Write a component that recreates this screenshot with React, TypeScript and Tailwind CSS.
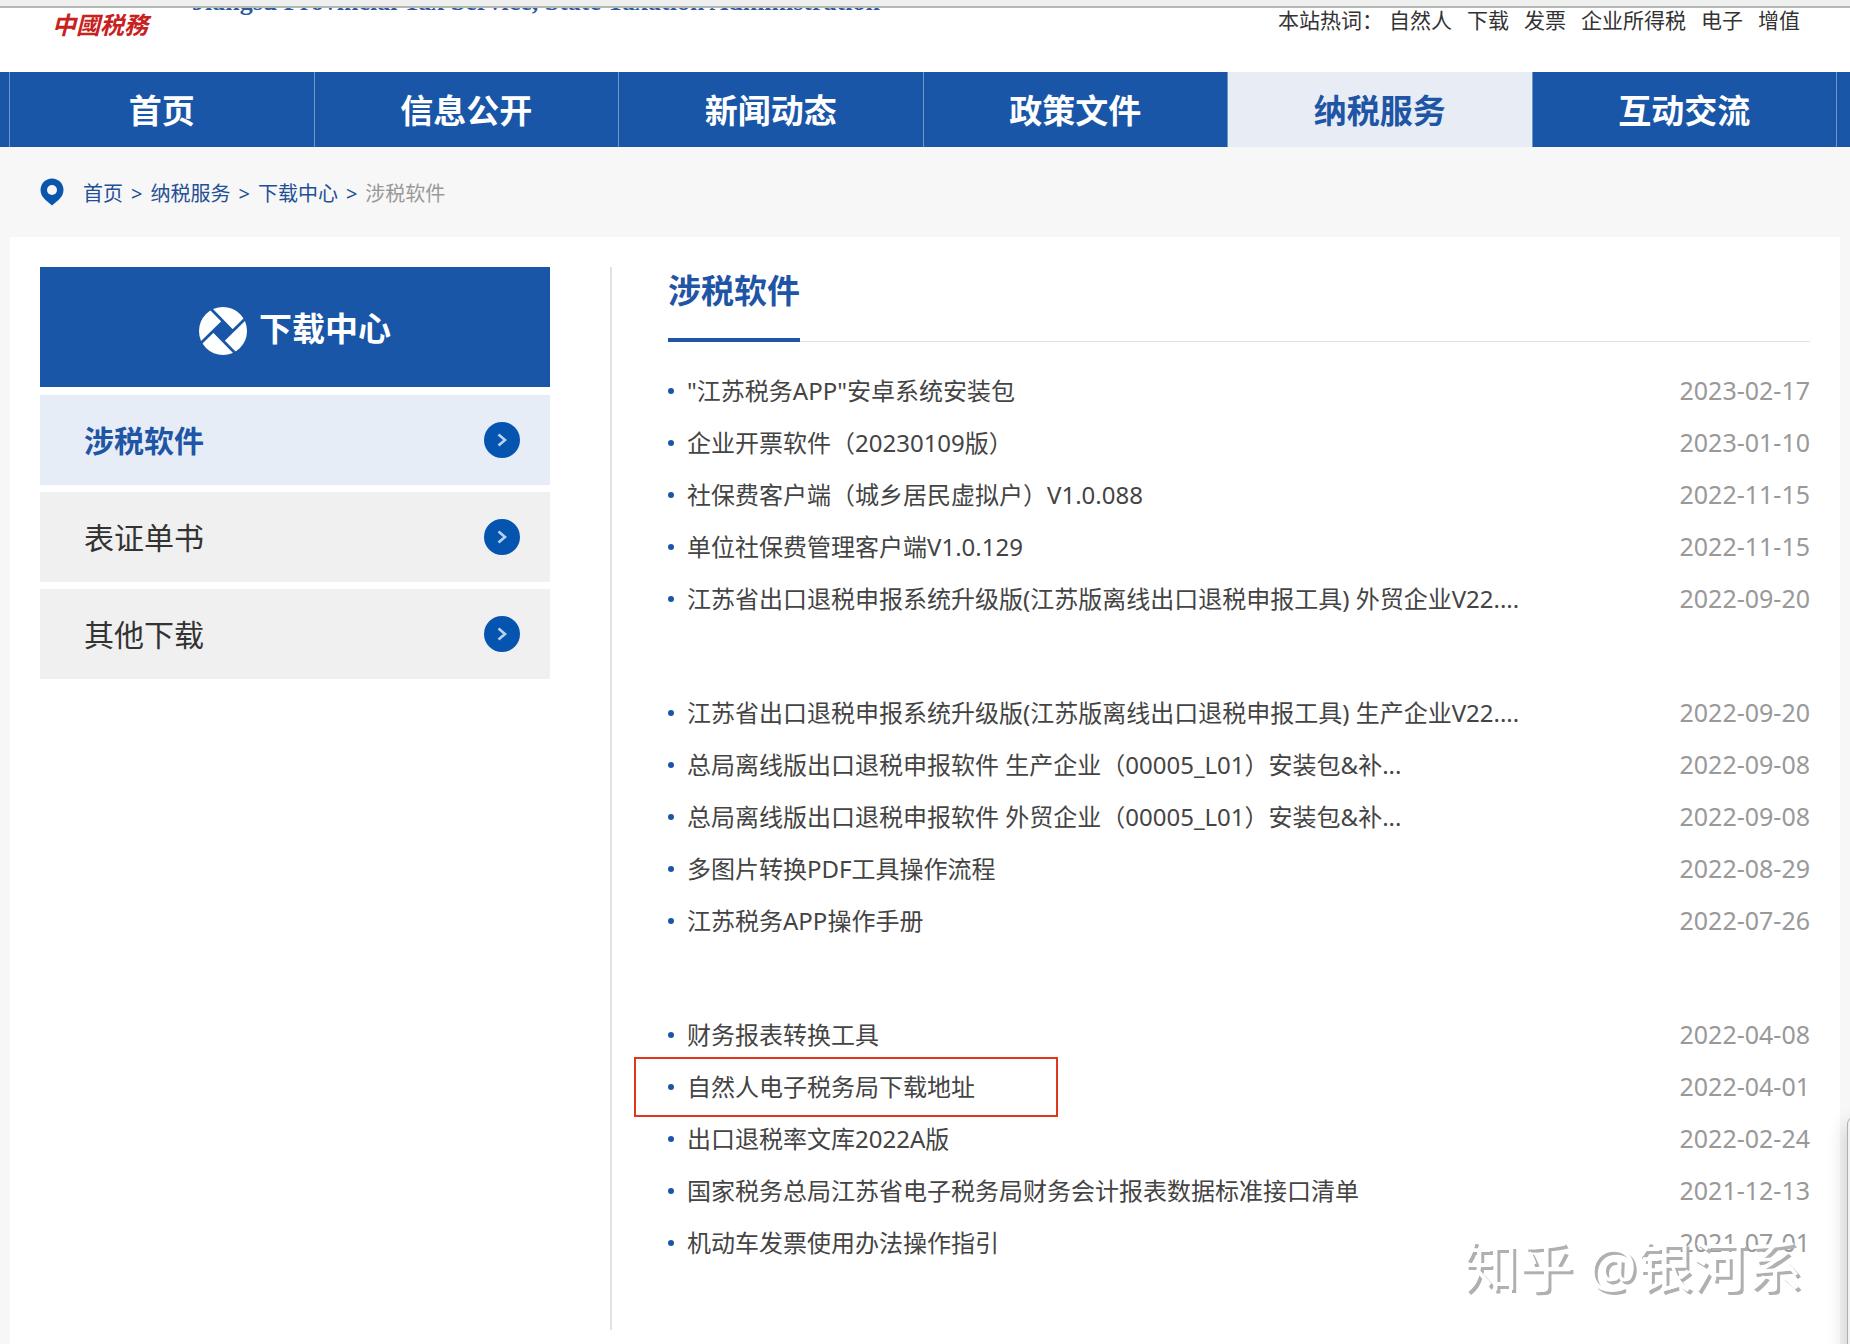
const navItems = ['首页', '信息公开', '新闻动态', '政策文件', '纳税服务', '互动交流'];

const hotWords = ['自然人', '下载', '发票', '企业所得税', '电子', '增值'];

const crumbs = ['首页', '纳税服务', '下载中心'];

const sideItems = ['涉税软件', '表证单书', '其他下载'];

type Entry = { title: string; date: string; marked?: boolean };

const groups: Entry[][] = [
  [
    { title: '"江苏税务APP"安卓系统安装包', date: '2023-02-17' },
    { title: '企业开票软件（20230109版）', date: '2023-01-10' },
    { title: '社保费客户端（城乡居民虚拟户）V1.0.088', date: '2022-11-15' },
    { title: '单位社保费管理客户端V1.0.129', date: '2022-11-15' },
    { title: '江苏省出口退税申报系统升级版(江苏版离线出口退税申报工具) 外贸企业V22....', date: '2022-09-20' },
  ],
  [
    { title: '江苏省出口退税申报系统升级版(江苏版离线出口退税申报工具) 生产企业V22....', date: '2022-09-20' },
    { title: '总局离线版出口退税申报软件 生产企业（00005_L01）安装包&补...', date: '2022-09-08' },
    { title: '总局离线版出口退税申报软件 外贸企业（00005_L01）安装包&补...', date: '2022-09-08' },
    { title: '多图片转换PDF工具操作流程', date: '2022-08-29' },
    { title: '江苏税务APP操作手册', date: '2022-07-26' },
  ],
  [
    { title: '财务报表转换工具', date: '2022-04-08' },
    { title: '自然人电子税务局下载地址', date: '2022-04-01', marked: true },
    { title: '出口退税率文库2022A版', date: '2022-02-24' },
    { title: '国家税务总局江苏省电子税务局财务会计报表数据标准接口清单', date: '2021-12-13' },
    { title: '机动车发票使用办法操作指引', date: '2021-07-01' },
  ],
];

function PinIcon() {
  return (
    <svg className="h-7 w-6" viewBox="0 0 24 28" aria-hidden="true">
      <path
        d="M12 0.5C5.6 0.5 0.5 5.6 0.5 12c0 4 2 7 5 10L12 27.5 18.5 22c3-3 5-6 5-10C23.5 5.6 18.4 0.5 12 0.5Z"
        fill="#0b56ad"
      />
      <circle cx="12" cy="12" r="5" fill="#f7f7f7" />
    </svg>
  );
}

function ApertureIcon() {
  return (
    <svg className="size-12" viewBox="0 0 48 48" aria-hidden="true">
      <circle cx="24" cy="24" r="24" fill="#fff" />
      <path d="M24 14 34 24 24 34 14 24Z" fill="#1a56a7" />
      <path
        d="M12 2 33 23.5M46 12 24.5 33M36 46 15 24.5M2 36 23.5 15"
        stroke="#1a56a7"
        strokeWidth="2.8"
        strokeLinecap="round"
        fill="none"
      />
    </svg>
  );
}

function ArrowIcon() {
  return (
    <svg className="size-9" viewBox="0 0 36 36" aria-hidden="true">
      <circle cx="18" cy="18" r="18" fill="#0554b0" />
      <path d="M14.5 12.5 21 18l-6.5 5.5" stroke="#b9d2ee" strokeWidth="2.6" fill="none" />
    </svg>
  );
}

function Header() {
  return (
    <header className="flex h-16 items-start justify-between overflow-hidden bg-white pr-[50px] pl-[52px]">
      <div className="flex items-start">
        <span className="font-[Noto_Sans_CJK_TC,sans-serif] text-2xl leading-8 font-bold text-[#c8221f] italic">
          中國税務
        </span>
        <span className="-mt-5 ml-11 font-[Liberation_Serif,serif] text-[26px] leading-7 font-bold text-[#2c5a9e]">
          Jiangsu Provincial Tax Service, State Taxation Administration
        </span>
      </div>
      <div className="flex text-[21px] leading-6 text-[#333]">
        <span className="mr-1.5">本站热词：</span>
        <ul className="flex gap-[15px]">
          {hotWords.map((word) => (
            <li key={word}>
              <a href="#">{word}</a>
            </li>
          ))}
        </ul>
      </div>
    </header>
  );
}

function Nav() {
  return (
    <nav className="bg-[#1a56a7] pr-[13px] pl-[9px]">
      <ul className="grid grid-cols-6 border-l border-[#6d96cb]">
        {navItems.map((item) => (
          <li key={item} className="border-r border-[#6d96cb]">
            <a
              href="#"
              className={
                item === '纳税服务'
                  ? 'flex h-[75px] items-center justify-center bg-[#e8edf5] pt-0.5 text-[33px] font-bold text-[#1f55a5]'
                  : 'flex h-[75px] items-center justify-center pt-0.5 text-[33px] font-bold text-white'
              }
            >
              {item}
            </a>
          </li>
        ))}
      </ul>
    </nav>
  );
}

function Breadcrumb() {
  return (
    <div className="flex h-[90px] items-center gap-[19px] pl-10 text-xl">
      <PinIcon />
      <ol className="flex gap-2 pt-1 text-[#1f4f96]">
        {crumbs.map((crumb) => (
          <li key={crumb} className="flex gap-2">
            <a href="#">{crumb}</a>
            <span>&gt;</span>
          </li>
        ))}
        <li className="text-[#999]">涉税软件</li>
      </ol>
    </div>
  );
}

function Sidebar() {
  return (
    <aside className="w-[510px] shrink-0">
      <h2 className="flex h-[120px] items-center justify-center gap-3 bg-[#1a56a7] pt-1 text-[33px] font-bold text-white">
        <span className="pt-1">
          <ApertureIcon />
        </span>
        下载中心
      </h2>
      <ul className="mt-2 flex flex-col gap-[7px]">
        {sideItems.map((item, i) => (
          <li key={item}>
            <a
              href="#"
              className={
                i === 0
                  ? 'flex h-[90px] items-center justify-between bg-[#e6edf6] pr-[30px] pl-11 text-3xl font-bold text-[#1f55a5]'
                  : 'flex h-[90px] items-center justify-between bg-[#f0f0f0] pr-[30px] pl-11 text-3xl text-[#333]'
              }
            >
              <span className="pt-0.5">{item}</span>
              <ArrowIcon />
            </a>
          </li>
        ))}
      </ul>
    </aside>
  );
}

function Row({ title, date, marked }: Entry) {
  return (
    <li className="relative flex h-[52px] items-center">
      <span className="size-1.5 shrink-0 rounded-full bg-[#1a56a7]" />
      <a href="#" className="ml-[13px] truncate text-2xl text-[#444]">
        {title}
      </a>
      <time className="ml-auto shrink-0 text-[25px] text-[#999]">{date}</time>
      {marked && <span className="absolute -top-1 -left-[34px] h-[60px] w-[424px] border-2 border-[#e0371c]" />}
    </li>
  );
}

export default function App() {
  return (
    <div className="relative flex min-h-screen flex-col overflow-hidden bg-[#f7f7f7] font-[Noto_Sans,Noto_Sans_CJK_SC,sans-serif]">
      <div className="h-2 border-b-2 border-[#b5b9b5] bg-[#efefef]" />
      <Header />
      <Nav />
      <Breadcrumb />
      <main className="mx-[10px] flex grow bg-white px-[30px] pt-[30px] pb-3.5">
        <Sidebar />
        <section className="ml-[60px] grow border-l-2 border-[#e2e2e2] pb-[61px] pl-14">
          <div className="flex h-[75px] border-b border-[#e2e2e2]">
            <h1 className="-mb-px border-b-4 border-[#1f55a5] text-[33px] leading-[48px] font-bold text-[#1f55a5]">
              涉税软件
            </h1>
          </div>
          <div className="flex flex-col gap-[62px] pt-[23px]">
            {groups.map((group, i) => (
              <ul key={i}>
                {group.map((entry) => (
                  <Row key={entry.title} {...entry} />
                ))}
              </ul>
            ))}
          </div>
        </section>
      </main>
      <div className="absolute right-12 bottom-10 text-[55px] leading-[76px] text-white [text-shadow:3px_3px_0_#b0b0b0]">
        知乎 @银河系
      </div>
      <div className="absolute -right-5 -bottom-5 h-[248px] w-[23px] rounded-tl-lg border border-[#b0b0b0] bg-[#f2f2f2] shadow-[0_8px_20px_rgba(0,0,0,0.2)]" />
    </div>
  );
}
